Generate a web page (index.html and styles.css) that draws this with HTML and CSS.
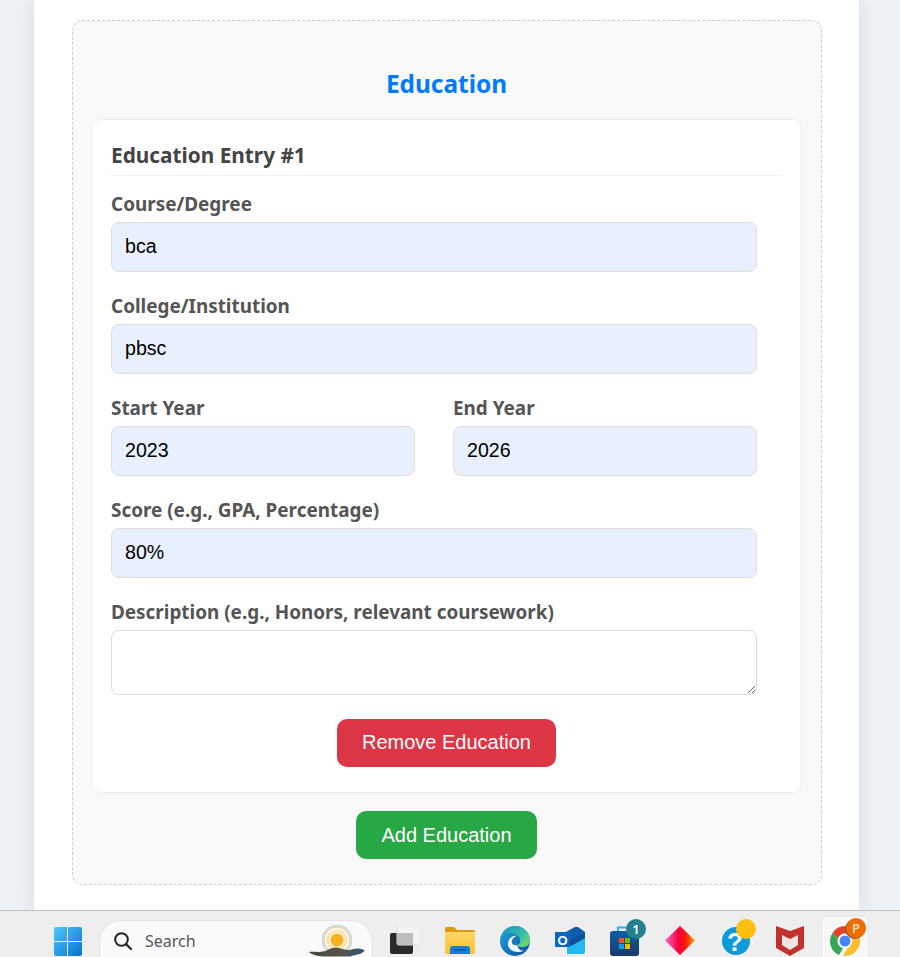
FILE: index.html
```html
<!DOCTYPE html>
<html lang="en">
<head>
    <meta charset="UTF-8">
    <meta name="viewport" content="width=device-width, initial-scale=1.0">
    <title>Resume Builder</title>
    <link rel="stylesheet" href="styles.css">
</head>
<body>
    <div class="page">
        <main class="container">
            <section class="section">
                <h2 class="section-title">Education</h2>

                <div class="entry">
                    <h3 class="entry-title">Education Entry #1</h3>

                    <div class="form-group">
                        <label class="label">Course/Degree</label>
                        <input class="field filled" type="text" value="bca">
                    </div>
                    <div class="form-group">
                        <label class="label">College/Institution</label>
                        <input class="field filled" type="text" value="pbsc">
                    </div>
                    <div class="form-row">
                        <div class="form-group">
                            <label class="label">Start Year</label>
                            <input class="field filled" type="text" value="2023">
                        </div>
                        <div class="form-group">
                            <label class="label">End Year</label>
                            <input class="field filled" type="text" value="2026">
                        </div>
                    </div>
                    <div class="form-group">
                        <label class="label">Score (e.g., GPA, Percentage)</label>
                        <input class="field filled" type="text" value="80%">
                    </div>
                    <div class="form-group">
                        <label class="label">Description (e.g., Honors, relevant coursework)</label>
                        <textarea class="field area"></textarea>
                    </div>

                    <div class="btn-row">
                        <button class="btn btn-remove">Remove Education</button>
                    </div>
                </div>

                <div class="btn-row">
                    <button class="btn btn-add">Add Education</button>
                </div>
            </section>
        </main>
    </div>

    <footer class="taskbar">
        <div class="slot">
            <svg class="icon" viewBox="0 0 30 30">
                <defs>
                    <linearGradient id="winBlue" x1="0" y1="0" x2="1" y2="1">
                        <stop offset="0" stop-color="#4fc8fb"/>
                        <stop offset="1" stop-color="#0373d2"/>
                    </linearGradient>
                </defs>
                <path fill="url(#winBlue)" d="M1 3a2 2 0 0 1 2-2h11v14H1zM15 1h12a2 2 0 0 1 2 2v12H15zM1 16h13v14H3a2 2 0 0 1-2-2zM15 16h14v12a2 2 0 0 1-2 2H15z"/>
            </svg>
        </div>

        <div class="search">
            <svg class="search-icon" viewBox="0 0 18 18">
                <circle cx="7.5" cy="7.5" r="6.3" fill="none" stroke="#222" stroke-width="2"/>
                <path d="M12.2 12.2l4.800 4.800" stroke="#222" stroke-width="2.2" stroke-linecap="round"/>
            </svg>
            <span class="search-text">Search</span>
            <svg class="search-art" viewBox="0 0 56 36">
                <defs>
                    <linearGradient id="hill" x1="0" y1="0" x2="1" y2="0">
                        <stop offset="0" stop-color="#3f4740"/>
                        <stop offset=".55" stop-color="#5a5346"/>
                        <stop offset="1" stop-color="#2f5a7a"/>
                    </linearGradient>
                </defs>
                <circle cx="28" cy="17" r="14.5" fill="#fff6e6" stroke="#bcd8e8" stroke-width="1.5"/>
                <circle cx="28" cy="17" r="13" fill="none" stroke="#f0c98a" stroke-width="1"/>
                <circle cx="28" cy="17" r="9" fill="none" stroke="#fbd27a" stroke-width="3" stroke-dasharray="1 1.2"/>
                <circle cx="28" cy="17" r="6.5" fill="#fbb021"/>
                <path fill="url(#hill)" d="M0 29c5-.5 10 .5 14-.5 5-1 8-4 13-4 4 0 7 2.500 12 2.500 3 0 7-2 10-1.500 3 0 6 1 6.500 2-2 4-9 4-14 6H14C9 33 3 32 0 29z"/>
            </svg>
        </div>

        <div class="slot">
            <svg class="icon" viewBox="0 0 30 30">
                <rect x="0" y="7" width="23" height="21" rx="2" fill="#2a2a2a"/>
                <rect x="7" y="0" width="23" height="19" rx="1.5" fill="#f3f3f3" stroke="#dedede"/>
                <rect x="7" y="7" width="16" height="12" fill="#bdbdbd"/>
            </svg>
        </div>

        <div class="slot">
            <svg class="icon" viewBox="0 0 30 30">
                <defs>
                    <linearGradient id="folderBody" x1="0" y1="0" x2="0" y2="1">
                        <stop offset="0" stop-color="#fdd766"/>
                        <stop offset="1" stop-color="#fbbf2c"/>
                    </linearGradient>
                </defs>
                <path fill="#dd9a0c" d="M0 3a2 2 0 0 1 2-2h7l3 3h16a2 2 0 0 1 2 2v3H0z"/>
                <path fill="url(#folderBody)" d="M0 6h30v20a2 2 0 0 1-2 2H2a2 2 0 0 1-2-2z"/>
                <path fill="#0f82d8" d="M5 23a3 3 0 0 1 3-3h14a3 3 0 0 1 3 3v5H5z"/>
                <rect x="9" y="23" width="12" height="1.5" fill="#0a4f8f"/>
            </svg>
        </div>

        <div class="slot">
            <svg class="icon" viewBox="0 0 30 30">
                <defs>
                    <linearGradient id="edgeBlue" x1="0" y1="0" x2="1" y2="1">
                        <stop offset="0" stop-color="#22a6e0"/>
                        <stop offset="1" stop-color="#0a4f9e"/>
                    </linearGradient>
                    <linearGradient id="edgeGreen" x1="0" y1="0" x2="1" y2="1">
                        <stop offset="0" stop-color="#1d8fc8"/>
                        <stop offset=".6" stop-color="#36c3a0"/>
                        <stop offset="1" stop-color="#8be05a"/>
                    </linearGradient>
                </defs>
                <circle cx="15" cy="15" r="15" fill="url(#edgeBlue)"/>
                <path fill="url(#edgeGreen)" d="M1 10C3 4 9 0 15 0c9 0 15 7 15 14 0 5-4 7-8 7-3 0-5-1-5-2 3-1 4-3 3-6-1-4-5-6-9-6-4 0-8 1-10 3z"/>
                <path fill="#f4f8fb" d="M17 19c-4 1-6-2-5-5 1-2 3-4 5-4-5-1-9 3-9 8 0 5 5 8 10 8 2 0 4-.5 6-1.500-4 .5-6-2-7-5.500z"/>
            </svg>
        </div>

        <div class="slot">
            <svg class="icon" viewBox="0 0 30 30">
                <path fill="#0f5ea8" d="M7 8l13-7h3l7 5v6L16 20z"/>
                <path fill="#26b8f0" d="M12 16l18-6v16a2 2 0 0 1-2 2H12z"/>
                <path fill="#0c4f94" d="M30 7v5l-14 8-5-4z"/>
                <rect x="0" y="6" width="15" height="15" rx="1" fill="#0b66c3"/>
                <text class="outlook-o" x="7.5" y="18.5" text-anchor="middle">O</text>
            </svg>
        </div>

        <div class="slot">
            <svg class="icon" viewBox="0 0 30 30">
                <defs>
                    <linearGradient id="storeBlue" x1="0" y1="0" x2="0" y2="1">
                        <stop offset="0" stop-color="#0c5fa5"/>
                        <stop offset="1" stop-color="#1b3a6b"/>
                    </linearGradient>
                </defs>
                <path fill="none" stroke="#2ab0ea" stroke-width="2" d="M8 6V1.5h14V6"/>
                <rect x="0" y="5" width="29" height="25" rx="3" fill="url(#storeBlue)"/>
                <rect x="9" y="12" width="5" height="5" fill="#f25022"/>
                <rect x="15" y="12" width="5" height="5" fill="#7fba00"/>
                <rect x="9" y="18" width="5" height="5" fill="#00a4ef"/>
                <rect x="15" y="18" width="5" height="5" fill="#ffb900"/>
            </svg>
            <span class="badge badge-count">1</span>
        </div>

        <div class="slot">
            <svg class="icon" viewBox="0 0 30 30">
                <defs>
                    <linearGradient id="diamond" x1="0" y1="0" x2="1" y2="0">
                        <stop offset="0" stop-color="#f56ad0"/>
                        <stop offset=".45" stop-color="#f5003c"/>
                        <stop offset=".7" stop-color="#f91c06"/>
                        <stop offset="1" stop-color="#ffa800"/>
                    </linearGradient>
                </defs>
                <path fill="url(#diamond)" d="M15 0l15 14.500L15 29 0 14.500z"/>
            </svg>
        </div>

        <div class="slot">
            <svg class="icon" viewBox="0 0 30 30">
                <circle cx="16" cy="15" r="14" fill="#0e9ad7"/>
                <text class="help-mark" x="15" y="25" text-anchor="middle">?</text>
            </svg>
            <span class="badge badge-dot"></span>
        </div>

        <div class="slot">
            <svg class="icon" viewBox="0 0 30 30">
                <path fill="#c1322e" d="M1 0l14 5 14-5v22l-14 8-14-8z"/>
                <path fill="#f3e4e3" d="M7 9l8 4 8-4v10l-8 5-8-5z"/>
            </svg>
        </div>

        <div class="slot slot-active">
            <svg class="icon" viewBox="0 0 30 30">
                <path fill="#e3432f" d="M15 0a15 15 0 0 1 13 7.500H15a7.500 7.500 0 0 0-7 5L2.500 7A15 15 0 0 1 15 0z"/>
                <path fill="#34a853" d="M2.500 7L8 12.500A7.500 7.500 0 0 0 13 22.300L9 29A15 15 0 0 1 2.500 7z"/>
                <path fill="#fbc02d" d="M28 7.500A15 15 0 0 1 15 30h-2l4.500-8A7.500 7.500 0 0 0 21 12z"/>
                <circle cx="15" cy="15" r="7" fill="#fff"/>
                <circle cx="15" cy="15" r="5.5" fill="#4285f4"/>
            </svg>
            <span class="badge badge-profile">P</span>
        </div>
    </footer>
</body>
</html>
```

FILE: styles.css
```css
* {
    box-sizing: border-box;
}

html, body {
    height: 100%;
}

body {
    margin: 0;
    display: flex;
    flex-direction: column;
    overflow: hidden;
    background-color: #eef2f5;
    font-family: "Noto Sans", "Open Sans", sans-serif;
}

.page {
    flex: 1;
    min-height: 0;
    overflow: hidden;
    padding: 0 41px 0 34px;
}

.container {
    height: 100%;
    padding: 20px 37px 0 38px;
    background-color: #fff;
    box-shadow: 0 0 20px rgba(0, 0, 0, 0.1);
}

/* Education block */
.section {
    padding: 0 19px 25px 18px;
    background-color: #f9f9f9;
    border: 1px dashed #ccc;
    border-radius: 10px;
}

.section-title {
    margin: 0;
    padding: 46px 0 18px;
    height: 98px;
    line-height: 34px;
    font-size: 24.4px;
    font-weight: 700;
    text-align: center;
    color: #007bff;
}

.entry {
    margin-bottom: 18px;
    padding: 19px 19px 25px;
    background-color: #fff;
    border: 1px solid #eee;
    border-radius: 10px;
}

.entry-title {
    margin: 0 0 16px;
    height: 37px;
    padding: 3px 0 6px;
    line-height: 27px;
    font-size: 20.8px;
    font-weight: 700;
    color: #444;
    border-bottom: 1px solid #eee;
}

.form-group {
    margin-bottom: 22px;
    width: 646px;
}

.form-row {
    display: grid;
    grid-template-columns: 304px 304px;
    gap: 38px;
    width: 646px;
}

.form-row .form-group {
    width: auto;
}

.label {
    display: block;
    margin-bottom: 6px;
    line-height: 24px;
    font-size: 18.9px;
    font-weight: 700;
    color: #555;
}

.field {
    display: block;
    width: 100%;
    height: 50px;
    padding: 0 13px 2px;
    font-family: "Liberation Sans", Arial, sans-serif;
    font-size: 19.6px;
    color: #000;
    background-color: #fff;
    border: 1px solid #ddd;
    border-radius: 8px;
}

.filled {
    background-color: #e8f0fe;
}

.area {
    height: 65px;
    margin-bottom: 24px;
}

.btn-row {
    display: flex;
    justify-content: center;
}

.btn {
    height: 48px;
    padding: 0 25.5px 2px;
    font-family: "Liberation Sans", Arial, sans-serif;
    font-size: 20px;
    color: #fff;
    border: none;
    border-radius: 10px;
    cursor: pointer;
}

.btn-remove {
    background-color: #dc3545;
}

.btn-add {
    padding-bottom: 0;
    background-color: #28a745;
}

/* Windows taskbar */
.taskbar {
    flex: none;
    display: flex;
    height: 47px;
    padding-left: 40px;
    overflow: hidden;
    background-color: #eee;
    border-top: 1px solid #bfbfbf;
}

.slot {
    position: relative;
    flex: none;
    width: 55px;
    padding-top: 15px;
    display: flex;
    justify-content: center;
}

.slot-active::before {
    content: '';
    position: absolute;
    top: 5px;
    left: 4px;
    right: 3px;
    bottom: -6px;
    background-color: #f7f7f7;
    border: 1px solid #e8e8e8;
    border-radius: 5px;
}

.icon {
    position: relative;
    width: 30px;
    height: 30px;
}

.search {
    flex: none;
    display: flex;
    align-items: flex-start;
    width: 274px;
    height: 46px;
    margin: 9px 4px 0;
    padding-left: 14px;
    background-color: #fafafa;
    border: 1px solid #e2e2e2;
    border-bottom: none;
    border-radius: 22px 22px 0 0;
}

.search-icon {
    flex: none;
    width: 18px;
    height: 18px;
    margin-top: 11px;
}

.search-text {
    margin: 8px 0 0 13px;
    line-height: 24px;
    font-size: 16px;
    color: #555;
}

.search-art {
    flex: none;
    width: 56px;
    height: 36px;
    margin: 2px 7px 0 auto;
}

.badge {
    position: absolute;
    border-radius: 50%;
}

.badge-count {
    top: 8px;
    right: 6px;
    width: 20px;
    height: 20px;
    line-height: 20px;
    text-align: center;
    font-size: 13px;
    font-weight: 600;
    color: #fff;
    background-color: #24808f;
}

.badge-dot {
    top: 8px;
    right: 6px;
    width: 20px;
    height: 20px;
    background-color: #fdc00f;
}

.badge-profile {
    top: 7px;
    right: 6px;
    width: 20px;
    height: 20px;
    line-height: 20px;
    text-align: center;
    font-size: 13px;
    font-weight: 600;
    color: #ffd9b0;
    background-color: #ef6c00;
    box-shadow: -1px 1px 0 #8a5a3a;
}

.outlook-o {
    font-family: "Liberation Sans", Arial, sans-serif;
    font-size: 13px;
    font-weight: 700;
    fill: #fff;
}

.help-mark {
    font-family: "Liberation Sans", Arial, sans-serif;
    font-size: 26px;
    font-weight: 700;
    fill: #fff;
}
```
